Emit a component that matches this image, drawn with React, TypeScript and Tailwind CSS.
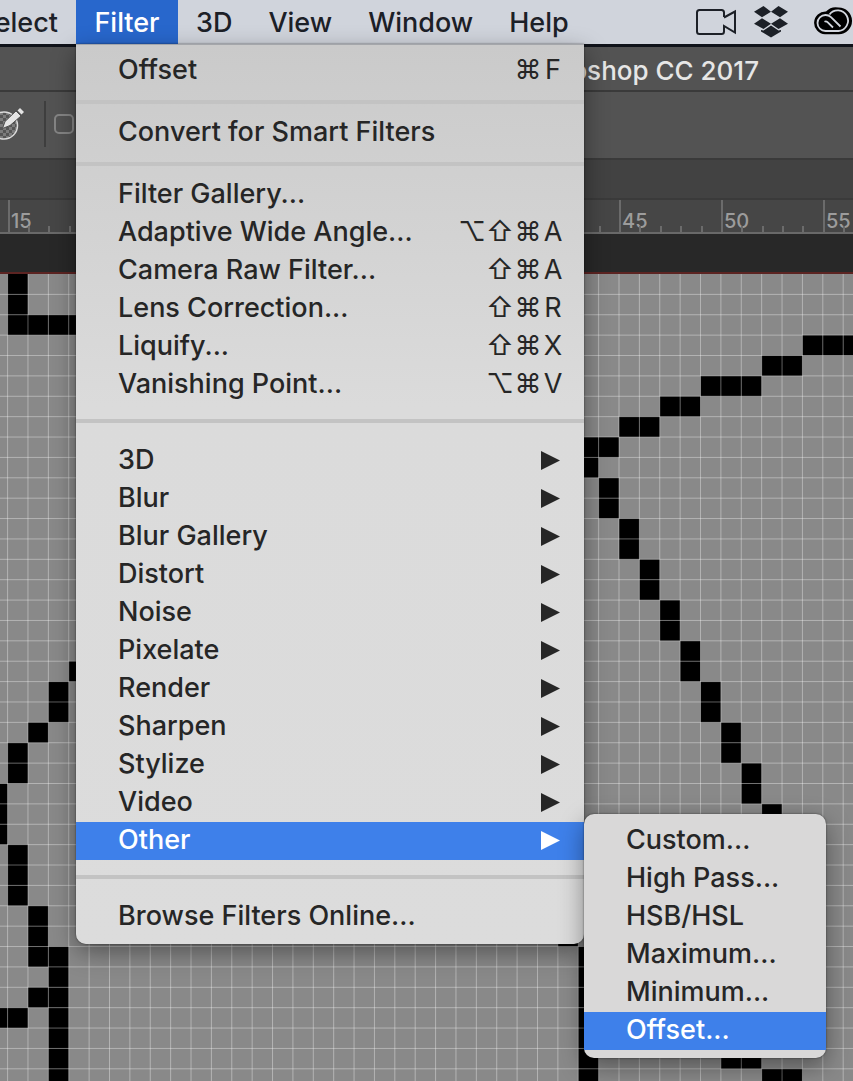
import React from "react";

const CELL = 20.38;
const ORIGIN_X = 7.6;
const COLUMNS = 130;
const ROWS = 70;

const pixels: [number, number[]][] = [
  [0, [0]],
  [1, [0]],
  [2, [0, 1, 2, 3]],
  [3, [39, 40, 41]],
  [4, [37, 38]],
  [5, [34, 35, 36]],
  [6, [32, 33]],
  [7, [30, 31]],
  [8, [28, 29]],
  [9, [28]],
  [10, [29]],
  [11, [29]],
  [12, [30]],
  [13, [30]],
  [14, [31]],
  [15, [31]],
  [16, [32]],
  [17, [32]],
  [18, [33]],
  [19, [33, 3]],
  [20, [34, 2]],
  [21, [34, 2]],
  [22, [35, 1]],
  [23, [35, 0]],
  [24, [36, 0]],
  [25, [36, -1]],
  [26, [37, -1]],
  [27, [-1]],
  [28, [0]],
  [29, [0]],
  [30, [0]],
  [31, [1]],
  [32, [1, 27]],
  [33, [1, 2, 28]],
  [34, [2, 28]],
  [35, [1, 2, 28]],
  [36, [-1, 0, 2, 28]],
  [37, [2, 28]],
  [38, [2, 28, 35, 36]],
  [39, [2, 28, 37, 38]],
];

const range = (n: number) => Array.from({ length: n }, (_, i) => i);

function Artwork() {
  return (
    <svg className="absolute inset-0 h-full w-full" aria-hidden="true">
      {pixels.map(([row, cols]) =>
        cols.map((col) => (
          <rect
            key={`${row}-${col}`}
            x={ORIGIN_X + col * CELL}
            y={row * CELL}
            width={CELL}
            height={CELL}
            fill="#000"
          />
        )),
      )}
      <g stroke="#fff" strokeOpacity="0.36">
        {range(COLUMNS).map((i) => (
          <line key={i} x1={ORIGIN_X + i * CELL} x2={ORIGIN_X + i * CELL} y1="0" y2="100%" />
        ))}
        {range(ROWS).map((i) => (
          <line key={i} x1="0" x2="100%" y1={(i + 1) * CELL} y2={(i + 1) * CELL} />
        ))}
      </g>
    </svg>
  );
}

function Ruler() {
  return (
    <svg className="block h-[34px] w-full border-b-2 border-[#696969] bg-[#464646]" aria-label="Ruler">
      {range(COLUMNS).map((i) => {
        const x = Math.round(ORIGIN_X + i * CELL);
        const major = i % 5 === 0;
        return (
          <g key={i}>
            <rect x={x} y={major ? 0 : 26} width="2" height={major ? 34 : 8} fill="#6b6b6b" />
            {major && (
              <text x={x + 3} y="28" fill="#9c9c9c" className="font-['Inter'] text-[20px] font-medium">
                {15 + i}
              </text>
            )}
          </g>
        );
      })}
    </svg>
  );
}

function CameraIcon() {
  return (
    <svg className="h-[32px] w-[42px]" viewBox="0 0 42 32" fill="none" stroke="#1c2027" strokeWidth="2" aria-hidden="true">
      <path d="M29 11V6.5Q29 4 26.500 4H4.500Q2 4 2 6.500V25.500Q2 28 4.500 28H26.500Q29 28 29 25.500V20L40 26.500V5.500L29 11.500" />
    </svg>
  );
}

function DropboxIcon() {
  return (
    <svg className="h-[32px] w-[34px]" viewBox="0 0 34 32" fill="#1c2027" aria-hidden="true">
      <path d="M9.500 0L17 5.700L8 11.300L0 5.700ZM24.500 0L34 5.700L26 11.300L17 5.700ZM8 12.300L17 17.700L9.500 23L0 17.700ZM26 12.300L34 17.700L24.500 23L17 17.700ZM17 19.500L24.500 24.500L27 24V25.500L17 31.500L7 25.500V24L9.500 24.500Z" />
    </svg>
  );
}

function CreativeCloudIcon() {
  return (
    <svg className="h-[28px] w-[40px]" viewBox="0 0 40 28" aria-hidden="true">
      <path d="M13 4.500A13.500 13.500 0 0 1 25.500 .5A13.300 13.300 0 0 1 39 13.500A13.300 13.300 0 0 1 25.500 27.300H12A11.400 11.400 0 0 1 13 4.500Z" fill="#000" />
      <g fill="none" stroke="#d2d6de" strokeWidth="1.800">
        <path d="M24 24H12.500A8 8 0 0 1 12.500 8C15 8 16.500 8.800 18 10.200L27.500 19.500" />
        <path d="M16.500 7.500A10.300 10.300 0 1 1 25.500 24H22" />
        <path d="M20 20.500L14.500 15.200Q13 13.800 11.500 14.800" />
      </g>
    </svg>
  );
}

function BrushIcon() {
  return (
    <svg className="h-[36px] w-[26px]" viewBox="0 0 26 36" aria-hidden="true">
      <defs>
        <pattern id="checker" width="6" height="6" patternUnits="userSpaceOnUse">
          <rect width="6" height="6" fill="#555" />
          <path d="M0 0h3v3h-3zM3 3h3v3h-3z" fill="#7c7c7c" />
        </pattern>
      </defs>
      <circle cx="4" cy="19.500" r="13.500" fill="url(#checker)" stroke="#dcdcdc" strokeWidth="1.500" />
      <path d="M2.500 22.500L5 15.500L16 5L21 10L10 19.500Z" fill="#e4e4e4" stroke="#505050" strokeWidth="1" />
      <path d="M17.500 4.500L20 2L24 6L21.500 8.500Z" fill="#e4e4e4" />
    </svg>
  );
}

const rowClass = "flex h-[38px] w-full items-center pl-[42px] pr-[20px] pb-[2px] text-left whitespace-nowrap";

function MenuRow({ label, keys, arrow, active }: { label: string; keys?: string[]; arrow?: boolean; active?: boolean }) {
  return (
    <button role="menuitem" className={`${rowClass} ${active ? "bg-[#3e80ea] text-white" : ""}`}>
      <span className="flex-1">{label}</span>
      {keys && (
        <kbd className="flex font-['Inter'] text-[27px] font-normal">
          {keys.map((k) => (
            <span key={k} className="w-[28px] text-center last:w-[22px]">
              {k}
            </span>
          ))}
        </kbd>
      )}
      {arrow && (
        <svg className="mr-[4px] h-[20px] w-[19px]" viewBox="0 0 19 20" fill="currentColor" aria-hidden="true">
          <path d="M0 1L19 10.500L0 20Z" />
        </svg>
      )}
    </button>
  );
}

function Separator({ tall }: { tall?: boolean }) {
  return (
    <div role="separator" className={tall ? "h-[38px] pt-[15px]" : "h-[24px] pt-[10px]"}>
      <div className="h-[4px] bg-[#c3c3c3]" />
    </div>
  );
}

function FilterMenu() {
  return (
    <div
      role="menu"
      aria-label="Filter"
      className="absolute top-full left-0 z-10 w-[508px] rounded-b-[10px] border-t border-[#a4a6aa] bg-linear-to-b from-[#cacaca] via-[#dbdbdb] via-40% to-[#dcdcdc] pt-[7px] pb-[8px] font-[450] text-[#262626] shadow-[0_8px_24px_rgba(0,0,0,0.4),0_0_2px_rgba(0,0,0,0.6)]"
    >
      <MenuRow label="Offset" keys={["⌘", "F"]} />
      <Separator />
      <MenuRow label="Convert for Smart Filters" />
      <Separator />
      <MenuRow label="Filter Gallery..." />
      <MenuRow label="Adaptive Wide Angle..." keys={["⌥", "⇧", "⌘", "A"]} />
      <MenuRow label="Camera Raw Filter..." keys={["⇧", "⌘", "A"]} />
      <MenuRow label="Lens Correction..." keys={["⇧", "⌘", "R"]} />
      <MenuRow label="Liquify..." keys={["⇧", "⌘", "X"]} />
      <MenuRow label="Vanishing Point..." keys={["⌥", "⌘", "V"]} />
      <Separator tall />
      {["3D", "Blur", "Blur Gallery", "Distort", "Noise", "Pixelate", "Render", "Sharpen", "Stylize", "Video"].map((l) => (
        <MenuRow key={l} label={l} arrow />
      ))}
      <div className="relative">
        <MenuRow label="Other" arrow active />
        <div
          role="menu"
          aria-label="Other"
          className="absolute -top-2 left-full w-[242px] rounded-[10px] bg-[#d9d8d8] py-2 shadow-[0_8px_24px_rgba(0,0,0,0.4),0_0_2px_rgba(0,0,0,0.6)]"
        >
          {["Custom...", "High Pass...", "HSB/HSL", "Maximum...", "Minimum..."].map((l) => (
            <MenuRow key={l} label={l} />
          ))}
          <MenuRow label="Offset..." active />
        </div>
      </div>
      <Separator tall />
      <MenuRow label="Browse Filters Online..." />
    </div>
  );
}

export default function App() {
  return (
    <div className="flex min-h-screen flex-col overflow-hidden bg-[#898989] font-['Inter','Liberation_Sans',sans-serif] text-[27px] leading-[34px]">
      <header className="relative z-10 flex h-[44px] bg-[#d0d4dc] font-medium text-[#1c2027]">
        <nav className="flex flex-1">
          <button className="flex w-[76px] shrink-0 items-center justify-end pt-[2px] pr-[18px]">Select</button>
          <div className="relative">
            <button className="h-full w-[102px] bg-[#2867cc] pt-[2px] text-white">Filter</button>
            <FilterMenu />
          </div>
          <button className="px-[18px] pt-[2px]">3D</button>
          <button className="px-[18px] pt-[2px]">View</button>
          <button className="px-[18px] pt-[2px]">Window</button>
          <button className="px-[18px] pt-[2px]">Help</button>
        </nav>
        <div className="flex shrink-0 items-center">
          <button aria-label="Camera" className="mr-[17px]"><CameraIcon /></button>
          <button aria-label="Dropbox" className="mr-[25px]"><DropboxIcon /></button>
          <button aria-label="Creative Cloud" className="pb-[2px]"><CreativeCloudIcon /></button>
        </div>
      </header>
      <div className="flex h-[48px] items-center justify-end border-t-[3px] border-b-2 border-t-[#10131a] border-b-[#3a3a3a] bg-[#535353] pt-1 pr-[94px] text-[26px] font-medium text-[#e6e6e6]">
        <h1>Adobe Photoshop CC 2017</h1>
      </div>
      <div className="flex h-[68px] items-center border-b-2 border-[#3a3a3a] bg-[#535353] pb-[2px]">
        <BrushIcon />
        <div className="mr-[8px] ml-[18px] h-[46px] w-[2px] bg-[#3e3e3e]" />
        <input type="checkbox" aria-label="Option" className="h-[20px] w-[20px] appearance-none rounded-[5px] border-2 border-[#858585]" />
      </div>
      <div className="h-[40px] border-b-2 border-[#3a3a3a] bg-[#424242]" />
      <Ruler />
      <div className="h-[40px] border-b-2 border-[#5c2422] bg-[#282828]" />
      <main className="relative min-h-[807px] flex-1">
        <Artwork />
      </main>
    </div>
  );
}
